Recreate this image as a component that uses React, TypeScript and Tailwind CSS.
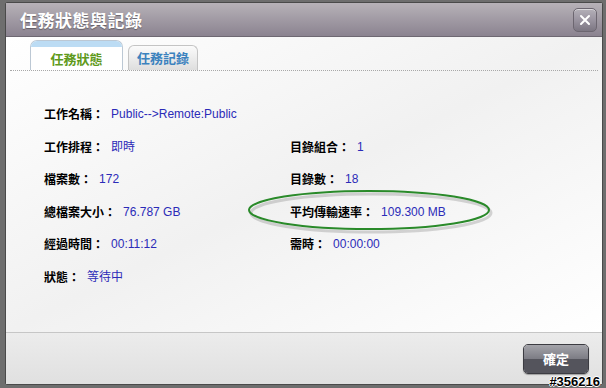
import React from "react";

const cjk = "font-['Liberation_Sans','Noto_Sans_CJK_TC',sans-serif]";

function Field({ label, value }: { label: string; value: string }) {
  return (
    <div className="flex items-center h-[32.5px] whitespace-nowrap">
      <span className="font-bold text-[12px] text-black font-['Noto_Sans_CJK_TC',sans-serif]">{label}：</span>
      <span className={`ml-[7px] text-[12px] text-[#2b2bb8] ${cjk}`}>{value}</span>
    </div>
  );
}

export default function App() {
  return (
    <div className="relative w-[606px] h-[388px] overflow-hidden bg-[#6e6e6e] font-['Noto_Sans_CJK_TC',sans-serif]">
      <div className="absolute left-[5px] top-[2px] w-[598px] h-[383px] flex flex-col border border-[#4a4a4a] bg-white rounded-[2px]">
        {/* title bar */}
        <div className="h-[34px] flex items-center justify-between pl-[14px] pr-[5px] bg-gradient-to-b from-[#b7b2b8] to-[#8b8390] border-b border-[#6e6872]">
          <span className="text-white text-[17px] font-bold tracking-[0.5px] [text-shadow:0_1px_1px_rgba(0,0,0,0.35)]">任務狀態與記錄</span>
          <div className="w-[24px] h-[24px] rounded-[5px] border border-[#6c6670] bg-gradient-to-b from-[#b4b0b8] via-[#9a94a0] to-[#7c7682] flex items-center justify-center shadow-[inset_0_1px_0_rgba(255,255,255,0.5)]">
            <svg width="12" height="12" viewBox="0 0 12 12">
              <path d="M2 2 L10 10 M10 2 L2 10" stroke="white" strokeWidth="2" strokeLinecap="round" />
            </svg>
          </div>
        </div>

        {/* body */}
        <div className="relative flex-1 flex flex-col bg-gradient-to-br from-white via-[#f1f1f1] to-white">
          <div className="flex items-end h-[34px] pl-[20px] gap-[5px] mx-[4px] border-b border-dotted border-[#a8a8a8]">
            <div className="w-[93px] h-[30px] rounded-t-[7px] border border-b-0 border-[#bcc8d4] bg-white flex flex-col overflow-hidden">
              <div className="h-[6px] bg-[#bcdcf4]" />
              <div className="flex-1 flex items-center justify-center text-[13px] font-bold text-[#5f9a1c]">任務狀態</div>
            </div>
            <div className="w-[70px] h-[25px] rounded-t-[6px] border border-b-0 border-[#c4c4c4] bg-gradient-to-b from-[#fbfbfb] to-[#dedede] flex items-center justify-center text-[13px] font-bold text-[#3b82be]">
              任務記錄
            </div>
          </div>

          <div className="pl-[38px] pt-[27px] grid grid-cols-[246px_1fr]">
            <Field label="工作名稱" value="Public-->Remote:Public" />
            <div />
            <Field label="工作排程" value="即時" />
            <Field label="目錄組合" value="1" />
            <Field label="檔案數" value="172" />
            <Field label="目錄數" value="18" />
            <Field label="總檔案大小" value="76.787 GB" />
            <Field label="平均傳輸速率" value="109.300 MB" />
            <Field label="經過時間" value="00:11:12" />
            <Field label="需時" value="00:00:00" />
            <Field label="狀態" value="等待中" />
            <div />
          </div>
        </div>

        {/* footer */}
        <div className="h-[52px] flex items-center justify-end pr-[13px] border-t border-[#c6c6c6] bg-gradient-to-b from-[#ececec] to-[#e0e0e0]">
          <div className="w-[66px] h-[30px] rounded-[5px] border border-[#3c3c42] overflow-hidden flex flex-col relative shadow-[0_1px_1px_rgba(0,0,0,0.3)]">
            <div className="h-1/2 bg-gradient-to-b from-[#a4a4aa] to-[#7c7c84]" />
            <div className="h-1/2 bg-[#54545c]" />
            <span className="absolute inset-0 flex items-center justify-center text-white text-[13px] font-bold">確定</span>
          </div>
        </div>
      </div>

      {/* annotation ellipse */}
      <svg className="absolute left-0 top-0" width="606" height="388">
        <ellipse cx="370" cy="211" rx="120" ry="19" fill="none" stroke="rgba(0,0,0,0.15)" strokeWidth="3" transform="translate(1 2)" />
        <ellipse cx="369" cy="210" rx="120" ry="19" fill="none" stroke="#2a8a2a" strokeWidth="2" />
      </svg>

      {/* watermark */}
      <div className="absolute right-[6px] bottom-[0px] text-[13px] font-bold leading-none text-black font-['Liberation_Sans',sans-serif] [text-shadow:1px_0_0_#fff,-1px_0_0_#fff,0_1px_0_#fff,0_-1px_0_#fff]">
        #356216
      </div>
    </div>
  );
}
